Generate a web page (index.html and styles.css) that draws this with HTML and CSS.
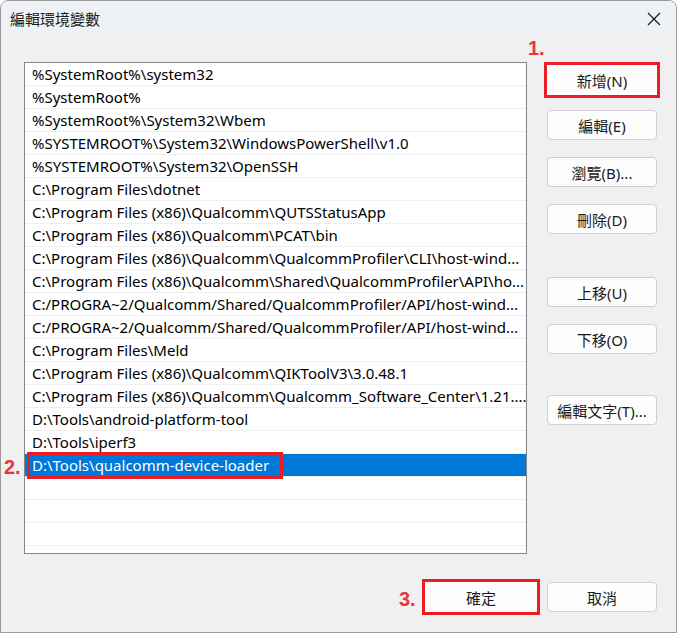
FILE: index.html
```html
<!DOCTYPE html>
<html lang="zh-Hant">
<head>
  <meta charset="UTF-8" />
  <title>編輯環境變數</title>
  <link rel="stylesheet" href="styles.css">
</head>
<body>
  <div class="window">
    <!-- 標題列 -->
    <div class="titlebar">
      <span class="title">編輯環境變數</span>
      <svg class="close" width="14" height="14" viewBox="0 0 14 14">
        <path d="M1 1 L13 13 M13 1 L1 13" stroke="#1a1a1a" stroke-width="1.2" fill="none"/>
      </svg>
    </div>

    <div class="content">
      <!-- 路徑清單 -->
      <div class="list">
        <div class="row">%SystemRoot%\system32</div>
        <div class="row">%SystemRoot%</div>
        <div class="row">%SystemRoot%\System32\Wbem</div>
        <div class="row">%SYSTEMROOT%\System32\WindowsPowerShell\v1.0</div>
        <div class="row">%SYSTEMROOT%\System32\OpenSSH</div>
        <div class="row">C:\Program Files\dotnet</div>
        <div class="row">C:\Program Files (x86)\Qualcomm\QUTSStatusApp</div>
        <div class="row">C:\Program Files (x86)\Qualcomm\PCAT\bin</div>
        <div class="row">C:\Program Files (x86)\Qualcomm\QualcommProfiler\CLI\host-wind...</div>
        <div class="row">C:\Program Files (x86)\Qualcomm\Shared\QualcommProfiler\API\ho...</div>
        <div class="row">C:/PROGRA~2/Qualcomm/Shared/QualcommProfiler/API/host-wind...</div>
        <div class="row">C:/PROGRA~2/Qualcomm/Shared/QualcommProfiler/API/host-wind...</div>
        <div class="row">C:\Program Files\Meld</div>
        <div class="row">C:\Program Files (x86)\Qualcomm\QIKToolV3\3.0.48.1</div>
        <div class="row">C:\Program Files (x86)\Qualcomm\Qualcomm_Software_Center\1.21....</div>
        <div class="row">D:\Tools\android-platform-tool</div>
        <div class="row">D:\Tools\iperf3</div>
        <div class="row selected">
          <span class="mark-box"></span>
          D:\Tools\qualcomm-device-loader
        </div>
        <div class="row"></div>
        <div class="row"></div>
        <div class="row"></div>
        <div class="row"></div>
      </div>

      <!-- 右側按鈕 -->
      <div class="side">
        <button class="btn marked">新增(N)<span class="step step-1">1.</span></button>
        <button class="btn">編輯(E)</button>
        <button class="btn">瀏覽(B)...</button>
        <button class="btn">刪除(D)</button>
        <button class="btn gap-top">上移(U)</button>
        <button class="btn">下移(O)</button>
        <button class="btn gap-top2">編輯文字(T)...</button>
      </div>
      <span class="step step-2">2.</span>
    </div>

    <!-- 底部按鈕 -->
    <div class="footer">
      <button class="btn ok marked">確定<span class="step step-3">3.</span></button>
      <button class="btn">取消</button>
      <svg class="grip" width="10" height="10" viewBox="0 0 10 10">
        <g fill="#b8b8b8">
          <rect x="8" y="0" width="2" height="2"/>
          <rect x="5" y="3" width="2" height="2"/><rect x="8" y="3" width="2" height="2"/>
          <rect x="2" y="6" width="2" height="2"/><rect x="5" y="6" width="2" height="2"/><rect x="8" y="6" width="2" height="2"/>
        </g>
      </svg>
    </div>
  </div>
</body>
</html>
```

FILE: styles.css
```css
* { box-sizing: border-box; }
body {
  margin: 0;
  background: #fff;
  font-family: "Noto Sans", "Noto Sans CJK TC", sans-serif;
  font-size: 15px;
  color: #000;
}
.window {
  width: 677px;
  height: 633px;
  background: #f0f0f0;
  border: 1px solid #9a9a9a;
  border-radius: 8px 8px 0 0;
  overflow: hidden;
  position: relative;
}
/* 標題列 */
.titlebar {
  height: 37px;
  background: #eef2f7;
  display: flex;
  align-items: center;
  justify-content: space-between;
  padding: 0 15px 0 9px;
}
.title {
  font-size: 15px;
  color: #1a1a1a;
  margin-top: -2px;
}
.close { margin-top: -1px; }

.content {
  display: flex;
  padding: 24px 19px 0 23px;
  gap: 20px;
  position: relative;
}
/* 清單 */
.list {
  width: 503px;
  height: 492px;
  background: #fff;
  border: 1px solid #828790;
  overflow: hidden;
}
.row {
  height: 23px;
  line-height: 22px;
  padding-left: 7px;
  border-bottom: 1px solid #efefef;
  white-space: nowrap;
  overflow: hidden;
  position: relative;
}
.row.selected {
  background: #0078d7;
  color: #fff;
  overflow: visible;
}
.mark-box {
  position: absolute;
  left: 2px;
  top: -2px;
  width: 256px;
  height: 27px;
  border: 3px solid #ec1c24;
}
/* 按鈕 */
.side {
  display: flex;
  flex-direction: column;
  width: 110px;
  padding-top: 3px;
}
.btn {
  width: 110px;
  height: 30px;
  background: #fdfdfd;
  border: 1px solid #cfcfcf;
  border-radius: 4px;
  font-family: inherit;
  font-size: 15px;
  color: #1a1a1a;
  padding: 0;
  margin: 0 0 17px;
  position: relative;
}
.side .btn.marked { margin-bottom: 15px; }
.side .btn.gap-top { margin-top: 26px; }
.side .btn.gap-top2 { margin-top: 24px; }
.btn.marked {
  outline: 3px solid #ec1c24;
  outline-offset: 0;
  border-radius: 0;
  border: 1px solid #fff;
}
.step {
  position: absolute;
  color: #e8363f;
  font-family: "Liberation Sans", sans-serif;
  font-weight: bold;
  font-size: 20px;
  line-height: 20px;
}
.step-1 { left: -20px; top: -28px; }
.step-2 { left: 3px; top: 419px; }
.step-3 { left: -27px; top: 6px; }

.footer {
  display: flex;
  justify-content: flex-end;
  gap: 10px;
  padding: 28px 19px 0 0;
  position: relative;
}
.btn.ok { width: 112px; }
.grip {
  position: absolute;
  right: 2px;
  bottom: -19px;
}
```
